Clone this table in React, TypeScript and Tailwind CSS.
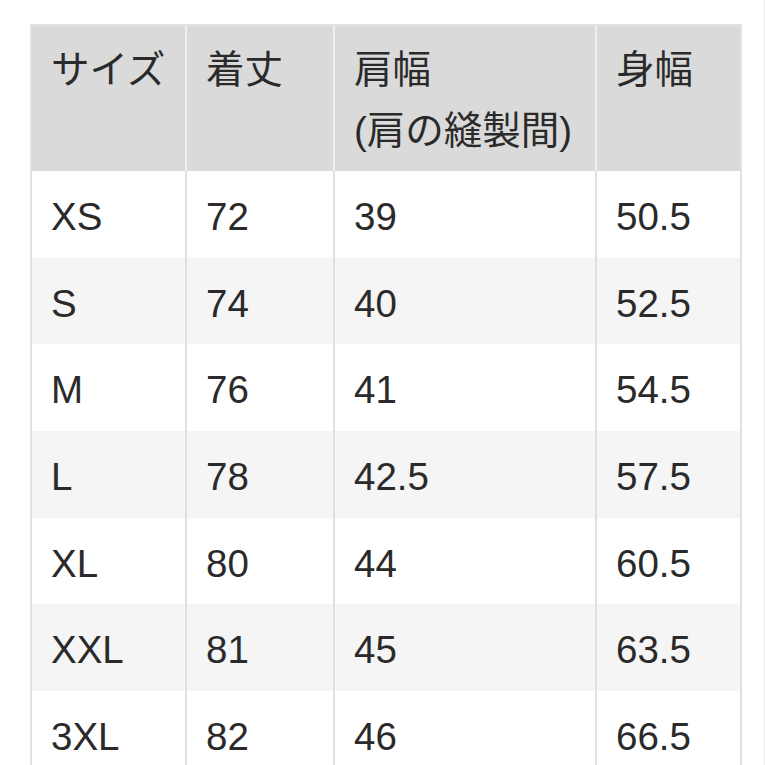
import React from "react";

const rows: [string, string, string, string][] = [
  ["XS", "72", "39", "50.5"],
  ["S", "74", "40", "52.5"],
  ["M", "76", "41", "54.5"],
  ["L", "78", "42.5", "57.5"],
  ["XL", "80", "44", "60.5"],
  ["XXL", "81", "45", "63.5"],
  ["3XL", "82", "46", "66.5"],
];

const cols = "grid grid-cols-[155px_148px_262px_145px]";

export default function App() {
  return (
    <div
      className="w-[765px] h-[765px] overflow-hidden bg-white border-r border-[#ececec] text-[#2a2a2a] text-[38.5px]"
      style={{ fontFamily: '"Liberation Sans", "Noto Sans CJK JP", sans-serif' }}
    >
      <div className="ml-[30px] mt-[24px] w-[712px] border-l-2 border-t-2 border-[#e2e2e2]">
        {/* header */}
        <div className={`${cols} bg-[#dadada] h-[145px]`}>
          {[["サイズ"], ["着丈"], ["肩幅", "(肩の縫製間)"], ["身幅"]].map((lines, i) => (
            <div key={i} className={`pl-[19px] pt-[13px] leading-[61px] ${i < 3 ? "border-r-2 border-[#efefef]" : "border-r-2 border-[#e2e2e2]"}`}>
              {lines.map((l) => (
                <div key={l}>{l}</div>
              ))}
            </div>
          ))}
        </div>
        {/* body */}
        {rows.map((r, ri) => (
          <div key={r[0]} className={`${cols} h-[86.7px] ${ri % 2 === 1 ? "bg-[#f5f5f5]" : "bg-white"}`}>
            {r.map((c, ci) => (
              <div key={ci} className="flex items-center pl-[19px] pt-[5px] border-r-2 border-[#e0e0e0]">
                {c}
              </div>
            ))}
          </div>
        ))}
      </div>
    </div>
  );
}
